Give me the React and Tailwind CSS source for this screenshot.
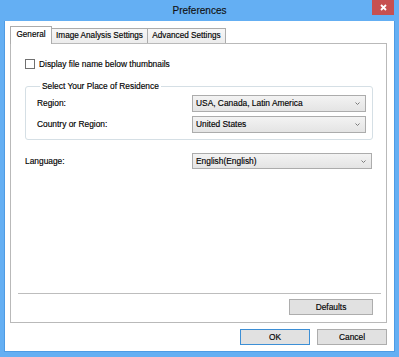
import React from "react";

const font = { fontFamily: '"Liberation Sans", Arial, sans-serif' };

function Chevron() {
  return (
    <svg width="5" height="3" viewBox="0 0 5 3" className="mr-[1px] shrink-0">
      <path d="M0.5 0.5 L2.5 2.5 L4.5 0.5" fill="none" stroke="#7a7a7a" strokeWidth="1" />
    </svg>
  );
}

function Select({ value, w, h }) {
  return (
    <div
      className={`flex items-center justify-between border border-[#acacac] bg-gradient-to-b from-[#f3f3f3] to-[#e4e4e4] pl-[3px] pr-[4px] ${w} ${h}`}
    >
      <span className="text-[8.4px] leading-none text-black">{value}</span>
      <Chevron />
    </div>
  );
}

function Button({ children, w, primary }) {
  return (
    <div
      className={`flex h-[16px] items-center justify-center border bg-[#e1e1e1] text-[8.4px] leading-none text-black ${w} ${
        primary ? "border-[#3c8fd6]" : "border-[#adadad]"
      }`}
    >
      {children}
    </div>
  );
}

export default function App() {
  return (
    <div
      style={font}
      className="flex h-[357px] w-[399px] flex-col bg-[#64aff3] px-[4px] pb-[5px] [-webkit-text-stroke:0.15px_currentColor]"
    >
      {/* Title bar */}
      <div className="-mx-[4px] grid h-[21px] grid-cols-[1fr_auto_1fr] items-center">
        <div />
        <div className="text-[10px] leading-none text-[#111]">Preferences</div>
        <div className="flex h-full justify-end pr-[5px]">
          <div className="flex h-[15px] w-[22px] items-center justify-center self-start bg-[#c75050]">
            <svg width="7" height="7" viewBox="0 0 7 7">
              <path d="M1 1 L6 6 M6 1 L1 6" stroke="#ffffff" strokeWidth="1.8" />
            </svg>
          </div>
        </div>
      </div>

      {/* Client area */}
      <div className="flex flex-1 flex-col border-x border-b border-[#4e9be4] bg-white px-[5px] pb-[6px]">
        {/* Tabs */}
        <div className="relative z-10 mt-[5px] -mb-px flex h-[18px] items-end text-[8.2px] leading-none text-black">
          <div className="relative z-10 flex h-[18px] w-[42px] items-center justify-center border-x border-t border-[#acacac] bg-white pb-[1px]">
            General
          </div>
          <div className="-ml-px mb-px flex h-[15px] w-[97px] items-center justify-center border border-b-0 border-[#acacac] bg-gradient-to-b from-[#f7f7f7] to-[#ececec]">
            Image Analysis Settings
          </div>
          <div className="-ml-px mb-px flex h-[15px] w-[79px] items-center justify-center border border-b-0 border-[#acacac] bg-gradient-to-b from-[#f7f7f7] to-[#ececec]">
            Advanced Settings
          </div>
        </div>

        {/* Panel */}
        <div className="flex h-[280px] w-[377px] flex-col border border-[#b9b9b9] bg-white text-[8.4px] leading-none text-black">
          <div className="ml-[14px] mt-[15px] flex h-[10px] items-center">
            <div className="h-[10px] w-[10px] border border-[#707070] bg-white" />
            <span className="ml-[4px]">Display file name below thumbnails</span>
          </div>

          <fieldset className="ml-[14px] mt-[12px] w-[348px] rounded-[3px] border border-[#d5dfe5] pb-[6px] pl-[11px] pr-[6px] pt-[4px]">
            <legend className="ml-[3px] px-[2px] leading-[10px]">Select Your Place of Residence</legend>
            <div className="flex h-[17px] items-center justify-between">
              <span>Region:</span>
              <Select value="USA, Canada, Latin America" w="w-[174px]" h="h-[17px]" />
            </div>
            <div className="mt-[4px] flex h-[17px] items-center justify-between">
              <span>Country or Region:</span>
              <Select value="United States" w="w-[174px]" h="h-[17px]" />
            </div>
          </fieldset>

          <div className="ml-[14px] mt-[13px] flex h-[16px] w-[347px] items-center justify-between">
            <span>Language:</span>
            <Select value="English(English)" w="w-[180px]" h="h-[16px]" />
          </div>

          <div className="flex-1" />

          <div className="ml-[7px] h-px w-[363px] bg-[#bdbdbd]" />

          <div className="mb-[7px] mr-[13px] mt-[5px] flex justify-end">
            <Button w="w-[84px]">Defaults</Button>
          </div>
        </div>

        {/* Dialog buttons */}
        <div className="mr-[2px] mt-[6px] flex justify-end gap-[7px]">
          <Button w="w-[70px]" primary>
            OK
          </Button>
          <Button w="w-[70px]">Cancel</Button>
        </div>
      </div>
    </div>
  );
}
